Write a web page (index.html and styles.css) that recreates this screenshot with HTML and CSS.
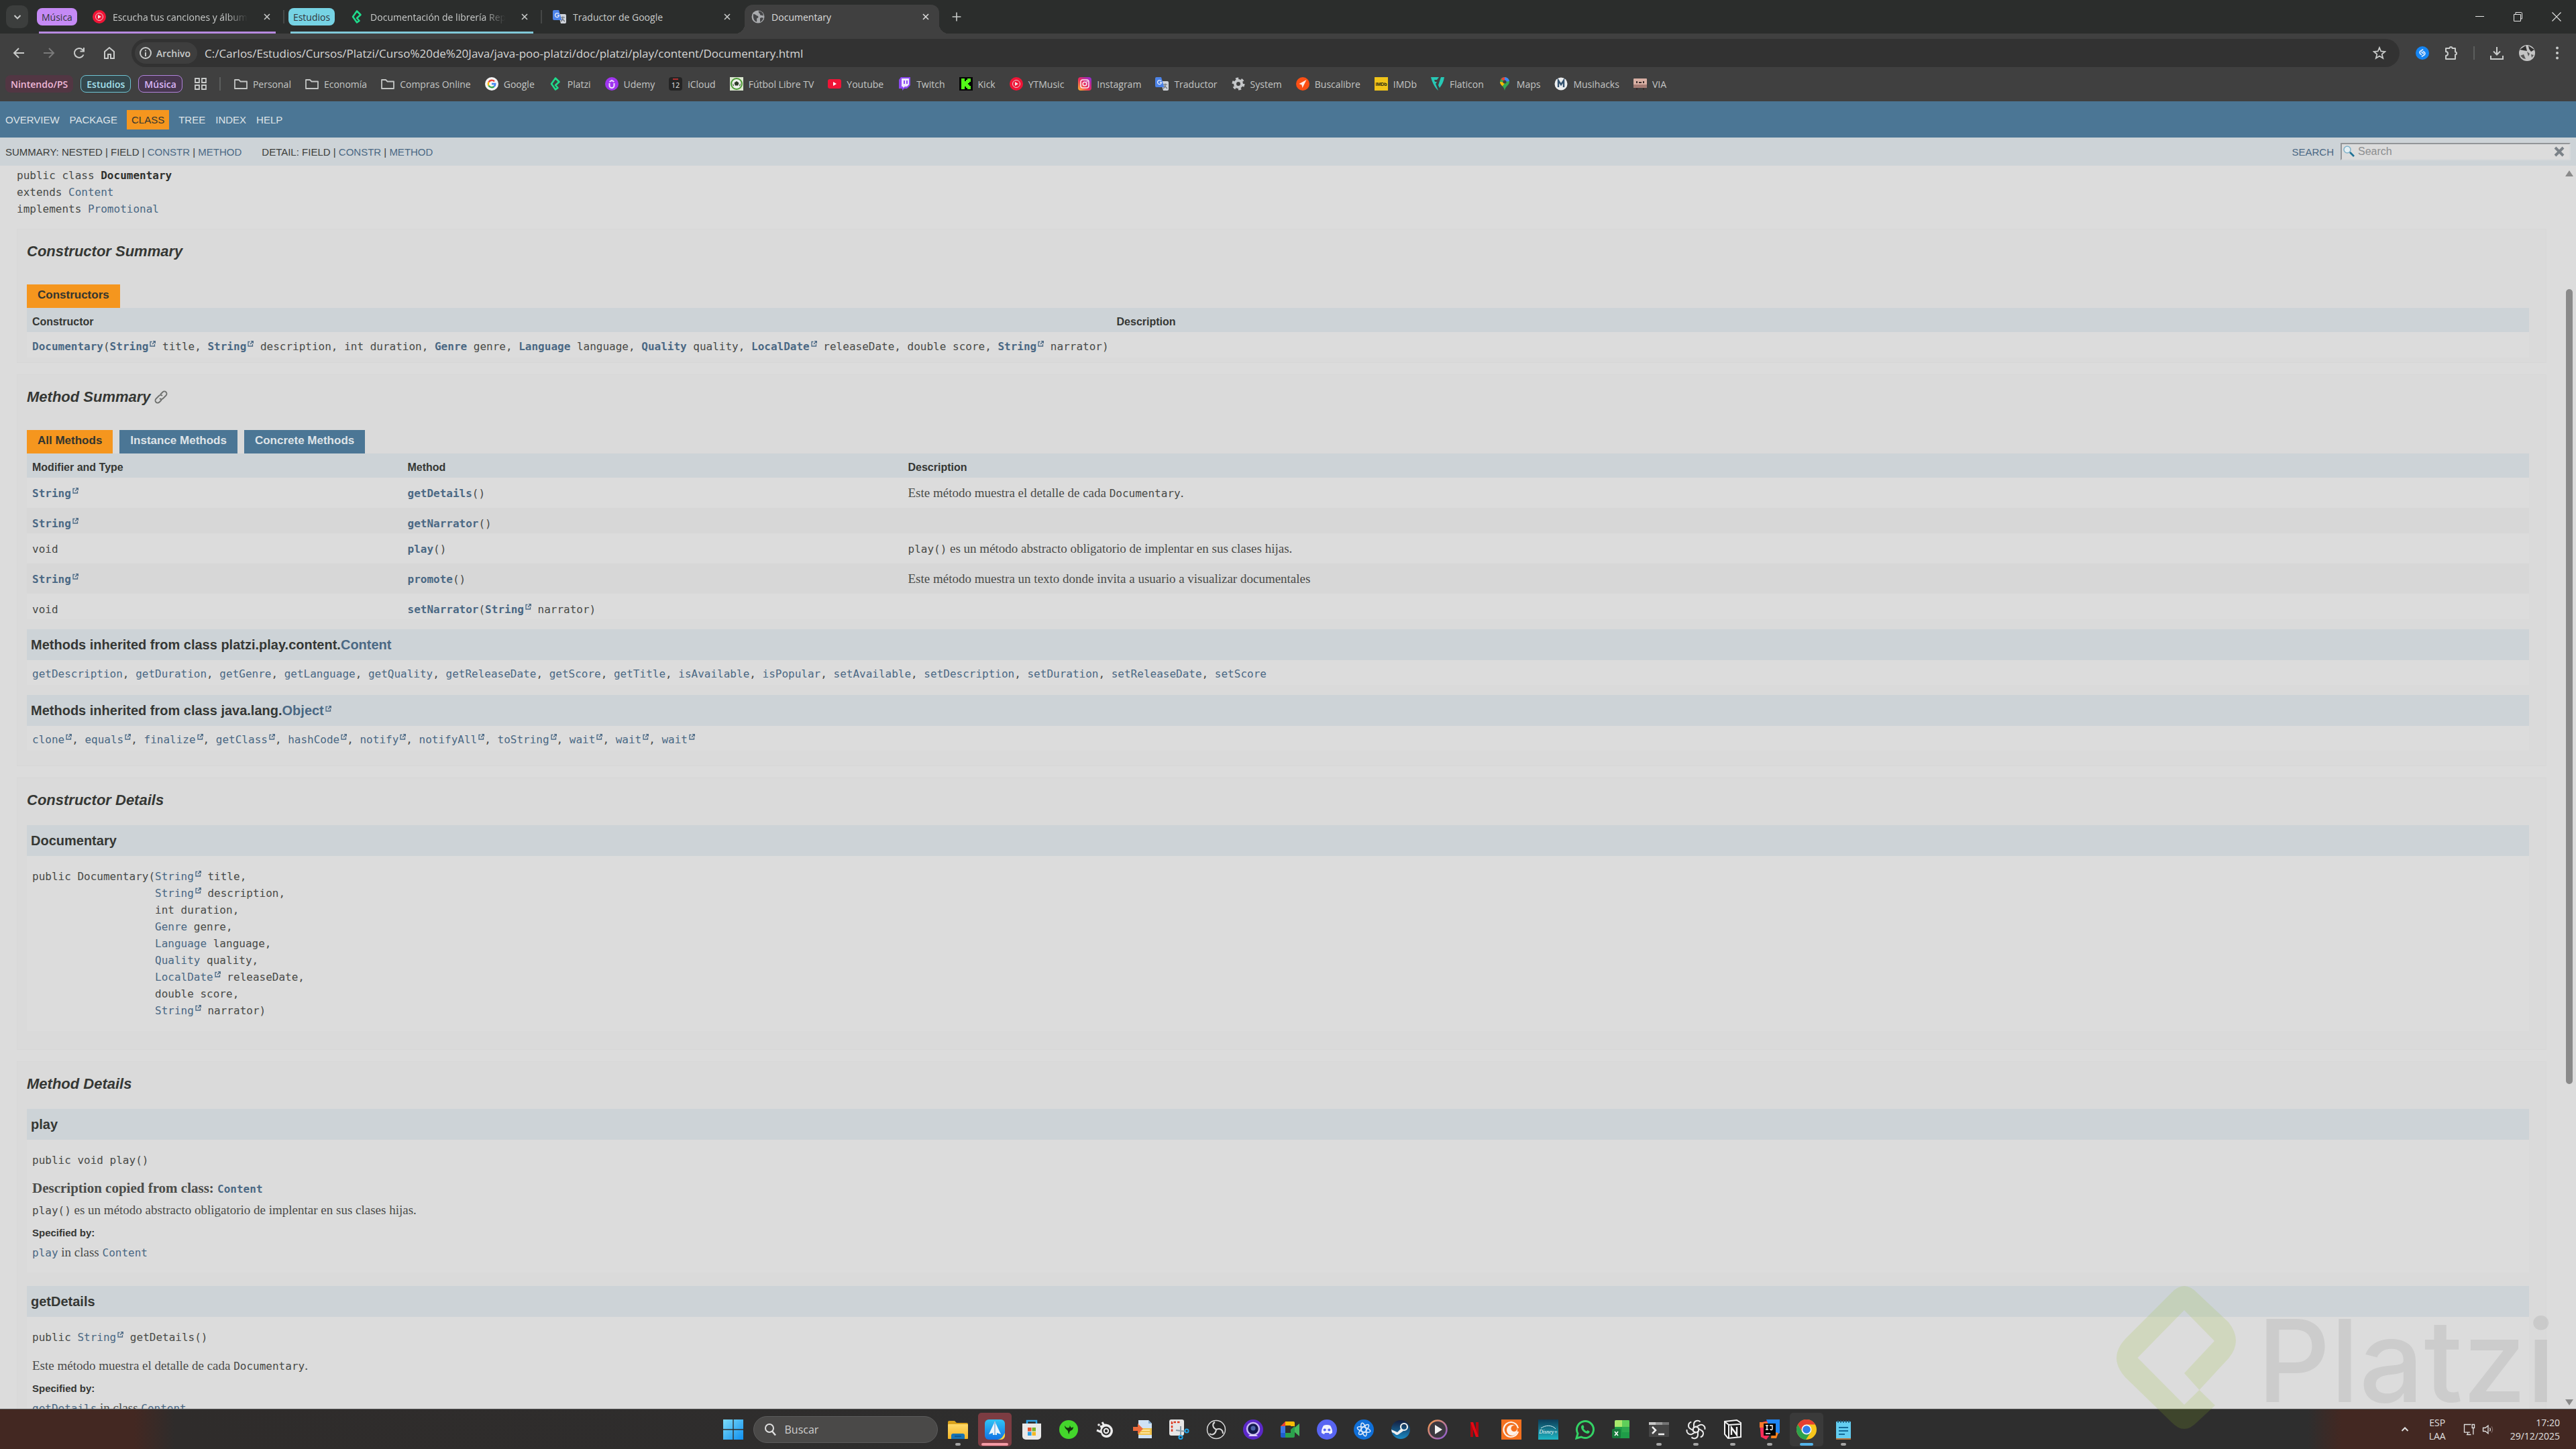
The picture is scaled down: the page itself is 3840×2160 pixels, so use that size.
FILE: index.html
```html
<!DOCTYPE html>
<html lang="es">
<head>
    <meta charset="UTF-8" />
    <meta name="viewport" content="width=device-width, initial-scale=1.0" />
    <title>Documentary</title>
    <link rel="stylesheet" href="styles.css">
</head>
<body>
    <svg class="sprite" aria-hidden="true">
        <defs>
            <linearGradient id="g-insta" x1="0" y1="1" x2="1" y2="0"><stop offset="0" stop-color="#fdc22f"/><stop offset=".45" stop-color="#ea2c59"/><stop offset="1" stop-color="#8a2be2"/></linearGradient>
            <linearGradient id="g-win" x1="0" y1="0" x2="1" y2="1"><stop offset="0" stop-color="#7ddcf8"/><stop offset="1" stop-color="#0f8ff0"/></linearGradient>
            <linearGradient id="g-sky" x1="0" y1="0" x2="0" y2="1"><stop offset="0" stop-color="#2fc4f5"/><stop offset="1" stop-color="#1273e6"/></linearGradient>
            <linearGradient id="g-folder" x1="0" y1="0" x2="0" y2="1"><stop offset="0" stop-color="#ffd968"/><stop offset="1" stop-color="#f3b526"/></linearGradient>
            <linearGradient id="g-media" x1="0" y1="0" x2="1" y2="1"><stop offset="0" stop-color="#f59a4a"/><stop offset="1" stop-color="#8a5bd8"/></linearGradient>
            <linearGradient id="g-steam" x1="0" y1="0" x2="0" y2="1"><stop offset="0" stop-color="#141c3c"/><stop offset="1" stop-color="#1a8ac4"/></linearGradient>
            <linearGradient id="g-disney" x1="0" y1="0" x2="0" y2="1"><stop offset="0" stop-color="#0c3c58"/><stop offset="1" stop-color="#1fb6c4"/></linearGradient>
        </defs>
        <symbol id="close" viewBox="0 0 20 20"><path d="M5 5l10 10M15 5L5 15" fill="none" stroke="currentColor" stroke-width="2"/></symbol>
        <symbol id="reset" viewBox="0 0 20 20"><path d="M4 4l12 12M16 4L4 16" fill="none" stroke="currentColor" stroke-width="4"/></symbol>
        <symbol id="chevron" viewBox="0 0 20 20"><path d="M5.5 8l4.500 4.500L14.500 8" fill="none" stroke="currentColor" stroke-width="2"/></symbol>
        <symbol id="ytmusic" viewBox="0 0 20 20"><circle cx="10" cy="10" r="10" fill="#f01436"/><circle cx="10" cy="10" r="5.5" fill="none" stroke="#e8d0d4" stroke-width="1"/><path d="M8 7l5 3-5 3z" fill="#f4e4e6"/></symbol>
        <symbol id="platzi" viewBox="0 0 20 20"><path d="M10 1.500L3.500 10l6.500 8.500 2.500-3L10 12.500l4.500-4z" fill="none"/><path d="M13.500 16L10 12l5.500-5L10 1.500 4 10l6 8.500z" fill="none" stroke="#1fdc8c" stroke-width="2.500" stroke-linejoin="round"/></symbol>
        <symbol id="translate" viewBox="0 0 20 20"><path d="M8 6h10a2 2 0 012 2v10a2 2 0 01-2 2h-6z" fill="#cfd3da"/><path d="M2 0h7l4.500 15H2a2 2 0 01-2-2V2a2 2 0 012-2z" fill="#4c83e8"/><path d="M9 6a3 3 0 10.500 2H7" fill="none" stroke="#e6ecfa" stroke-width="1.300"/><path d="M12 11h6M15 9.500V11c0 3-1.500 5-3 6M14 13l4 4" fill="none" stroke="#6a7078" stroke-width="1.200"/></symbol>
        <symbol id="globe" viewBox="0 0 20 20"><circle cx="10" cy="10" r="9.5" fill="#a9abae"/><path d="M3 6c3 0 4 2 6 2.500s2 3 0 3.500 0 3-1 5.500C5 17 2 13 3 6zM11 1.500c-1 3 2 3 2 5s3 1 5 2c0-4-3-7-7-7zM13 12c1-1 4-1 5 0-1 3-3 5-5 6z" fill="#454648"/></symbol>
        <symbol id="plus" viewBox="0 0 20 20"><path d="M10 2v16M2 10h16" stroke="currentColor" stroke-width="2"/></symbol>
        <symbol id="back" viewBox="0 0 20 20"><path d="M18 10H3M10 3l-7 7 7 7" fill="none" stroke="currentColor" stroke-width="2"/></symbol>
        <symbol id="forward" viewBox="0 0 20 20"><path d="M2 10h15M10 3l7 7-7 7" fill="none" stroke="currentColor" stroke-width="2"/></symbol>
        <symbol id="reload" viewBox="0 0 20 20"><path d="M16.500 12.500A7 7 0 1115 5l2 2M17 2v5.500h-5.500" fill="none" stroke="currentColor" stroke-width="2"/></symbol>
        <symbol id="home" viewBox="0 0 20 20"><path d="M3 18V8l7-6 7 6v10h-5v-6H8v6z" fill="none" stroke="currentColor" stroke-width="2"/></symbol>
        <symbol id="info" viewBox="0 0 20 20"><circle cx="10" cy="10" r="8" fill="none" stroke="currentColor" stroke-width="2"/><path d="M10 9v6M10 5.500v2" stroke="currentColor" stroke-width="2"/></symbol>
        <symbol id="star" viewBox="0 0 20 20"><path d="M10 2l2.300 5.500 6 .5-4.600 3.900 1.500 5.900L10 14.600l-5.200 3.200 1.500-5.900L1.700 8l6-.5z" fill="none" stroke="currentColor" stroke-width="1.800"/></symbol>
        <symbol id="shazam" viewBox="0 0 20 20"><circle cx="10" cy="10" r="10" fill="#1585f2"/><path d="M10.500 5L7 7.300a2.400 2.400 0 00-.3 3.500l1.800 1.600M9.500 15l3.500-2.300a2.400 2.400 0 00.3-3.500L11.500 7.600M11.500 10.800L9 8.600" fill="none" stroke="#dbe9fb" stroke-width="1.800" stroke-linecap="round"/></symbol>
        <symbol id="puzzle" viewBox="0 0 20 20"><path d="M2 3h5.500a2 2 0 014 0H16v5.500a2 2 0 010 4V19H2v-5a3 3 0 000-6z" fill="none" stroke="currentColor" stroke-width="2" stroke-linejoin="round"/></symbol>
        <symbol id="download" viewBox="0 0 20 20"><path d="M10 1v11M5 7.500l5 5 5-5M1 14v5h18v-5" fill="none" stroke="currentColor" stroke-width="2"/></symbol>
        <symbol id="avatar" viewBox="0 0 24 24"><circle cx="12" cy="12" r="12" fill="#c4c4c4"/><path d="M1 7L10 1l2 8-6-1zM14 1l9 6-5 3-3-4z" fill="#303030"/><path d="M2 16l5-2 3 7-4-1zM12 10l4 3-2 4zM18 14l4 1-3 4z" fill="#585858"/></symbol>
        <symbol id="dots" viewBox="0 0 20 20"><circle cx="10" cy="2.5" r="2" fill="currentColor"/><circle cx="10" cy="10" r="2" fill="currentColor"/><circle cx="10" cy="17.5" r="2" fill="currentColor"/></symbol>
        <symbol id="grid" viewBox="0 0 20 20"><path d="M2 2h6v6H2zM12 2h6v6h-6zM2 12h6v6H2zM12 12h6v6h-6z" fill="none" stroke="currentColor" stroke-width="1.800"/></symbol>
        <symbol id="folder" viewBox="0 0 20 20"><path d="M1 17V4h6l2.500 2.500H19V17z" fill="none" stroke="currentColor" stroke-width="1.800" stroke-linejoin="round"/></symbol>
        <symbol id="google" viewBox="0 0 20 20"><circle cx="10" cy="10" r="10" fill="#f4f4f4"/><path d="M14 6.400A5.300 5.300 0 005.400 7.500" fill="none" stroke="#ea4335" stroke-width="2.400"/><path d="M5.400 7.500a5.300 5.300 0 000 5" fill="none" stroke="#fbbc05" stroke-width="2.400"/><path d="M5.400 12.500a5.300 5.300 0 008 1.500" fill="none" stroke="#34a853" stroke-width="2.400"/><path d="M13.400 14a5 5 0 001.900-4H10" fill="none" stroke="#4285f4" stroke-width="2.400"/></symbol>
        <symbol id="udemy" viewBox="0 0 20 20"><circle cx="10" cy="10" r="10" fill="#a035f0"/><path d="M6.500 9v3.500a3.500 3.500 0 007 0V9M6.500 7L10 5l3.500 2" fill="none" stroke="#f0e4fa" stroke-width="2"/></symbol>
        <symbol id="futbol" viewBox="0 0 20 20"><rect width="20" height="20" fill="#dbe8d0"/><circle cx="10" cy="10" r="8" fill="#eef0ec" stroke="#4b9a34" stroke-width="2"/><path d="M10 6l3.500 2.500-1.300 4H7.800l-1.300-4zM4 9l2 3-1 2zM16 9l-2 3 1 2z" fill="#2c3a28"/></symbol>
        <symbol id="youtube" viewBox="0 0 20 20"><rect y="3" width="20" height="14" rx="3" fill="#f01436"/><path d="M8 7l5 3-5 3z" fill="#fff"/></symbol>
        <symbol id="twitch" viewBox="0 0 20 20"><path d="M5 0h14v12l-5 5h-4l-3 3v-3H2V4z" fill="#8c4af2"/><path d="M6 2h11v9l-3 3h-3l-3 2v-2H6z" fill="#efe8fb"/><path d="M10 5v5M14 5v5" stroke="#8c4af2" stroke-width="2"/></symbol>
        <symbol id="kick" viewBox="0 0 20 20"><rect width="20" height="20" fill="#050505"/><path d="M3 2h5v4h2V4h2V2h5v5h-2v2h-2v2h2v2h2v5h-5v-2h-2v-2H8v4H3z" fill="#53fc18"/></symbol>
        <symbol id="instagram" viewBox="0 0 20 20"><rect width="20" height="20" rx="4" fill="url(#g-insta)"/><rect x="4" y="4" width="12" height="12" rx="3" fill="none" stroke="#fbe6ee" stroke-width="1.600"/><circle cx="10" cy="10" r="2.8" fill="none" stroke="#fbe6ee" stroke-width="1.600"/><circle cx="13.5" cy="6.5" r="1" fill="#fbe6ee"/></symbol>
        <symbol id="gear" viewBox="0 0 20 20"><circle cx="10" cy="10" r="5" fill="none" stroke="#c4c6c8" stroke-width="4"/><circle cx="10" cy="10" r="7.5" fill="none" stroke="#c4c6c8" stroke-width="4" stroke-dasharray="3.9 3.95"/></symbol>
        <symbol id="buscalibre" viewBox="0 0 20 20"><circle cx="10" cy="10" r="10" fill="#fb4f14"/><path d="M15.500 4L4.500 10l4 1.500L9.500 16z" fill="#fdeee8"/></symbol>
        <symbol id="flaticon" viewBox="0 0 20 20"><path d="M0 0h12l-3 4H5l1 3h3l-2 3 4 10C6 16 2 8 0 0zM15 0h5c-1 7-4 12-7 16l-2-4z" fill="#27c9b6"/></symbol>
        <symbol id="maps" viewBox="0 0 20 20"><path d="M3 7a7 7 0 0114 0c0 5-6 6-7 13C9 13 3 12 3 7z" fill="#34a853"/><path d="M10 0a7 7 0 00-5.500 2.600L10 7z" fill="#ea4335"/><path d="M10 0a7 7 0 017 6l-7 1z" fill="#4285f4"/><path d="M3 7c0 3 2 4.500 3.500 6.500L11 8z" fill="#fbbc05"/><circle cx="10" cy="7" r="2.6" fill="#404040"/></symbol>
        <symbol id="musihacks" viewBox="0 0 20 20"><circle cx="10" cy="10" r="9.5" fill="#eceeef"/><path d="M6 15V5l4 6 4-6v10" fill="none" stroke="#34526e" stroke-width="2.400"/></symbol>
        <symbol id="via" viewBox="0 0 20 20"><rect y="2" width="20" height="14" rx="1" fill="#d9b0a4"/><rect y="11" width="20" height="5" fill="#a57c74"/><path d="M5 6v3M15 6v3M8 8h4M5 16v3M15 16v3" stroke="#3a2c2c" stroke-width="2"/></symbol>
        <symbol id="minimize" viewBox="0 0 20 20"><path d="M3 9.500h13" stroke="currentColor" stroke-width="1"/></symbol>
        <symbol id="restore" viewBox="0 0 20 20"><path d="M3.500 6.500h10v10h-10zM6 6V3.500h8.500a1 1 0 011 1V13H13" fill="none" stroke="currentColor" stroke-width="1"/></symbol>
        <symbol id="exit" viewBox="0 0 20 20"><path d="M3.500 3.500l13 13M16.500 3.500l-13 13" fill="none" stroke="currentColor" stroke-width="1.200"/></symbol>
        <symbol id="glass" viewBox="0 0 20 20"><circle cx="7" cy="7" r="5" fill="#e4eef2" stroke="#7fb2ca" stroke-width="1.500"/><path d="M11 11l6 6" stroke="#1f7196" stroke-width="2.600"/></symbol>
        <symbol id="chain" viewBox="0 0 20 20"><path d="M8 12a3.500 3.500 0 005 0l4.500-4.500a3.500 3.500 0 00-5-5L9 6M12 8a3.500 3.500 0 00-5 0l-4.500 4.500a3.500 3.500 0 005 5L11 14" fill="none" stroke="currentColor" stroke-width="1.800"/></symbol>
        <symbol id="t-windows" viewBox="0 0 30 30"><path d="M0 0h14.300v14.300H0zM15.700 0H30v14.300H15.700zM0 15.700h14.300V30H0zM15.700 15.700H30V30H15.700z" fill="url(#g-win)"/></symbol>
        <symbol id="t-search" viewBox="0 0 20 20"><circle cx="9" cy="8" r="6" fill="none" stroke="currentColor" stroke-width="2"/><path d="M13 12.500l5 6" stroke="currentColor" stroke-width="2.400"/></symbol>
        <symbol id="t-explorer" viewBox="0 0 30 30"><path d="M0 4a2 2 0 012-2h8l3 3h15a2 2 0 012 2v21H0z" fill="#d9a21c"/><rect y="7" width="30" height="22" rx="1" fill="url(#g-folder)"/><path d="M5 29v-5a3 3 0 013-3h14a3 3 0 013 3v5z" fill="#1673b4"/><path d="M10 25h10" stroke="#0d4f84" stroke-width="1.500"/></symbol>
        <symbol id="t-plane" viewBox="0 0 30 30"><rect width="30" height="30" rx="6" fill="url(#g-sky)"/><path d="M30 20v4a6 6 0 01-6 6h-5c7-1 8-5 11-10z" fill="#ffd43a"/><path d="M15 3l9 19-6-2v3h-6v-3l-6 2z" fill="#eef5fb"/><path d="M15 3v20" stroke="#9ec3e6" stroke-width="2"/></symbol>
        <symbol id="t-store" viewBox="0 0 30 30"><path d="M8 7V2h14v5" fill="none" stroke="#2fa5e8" stroke-width="2.500"/><path d="M1 6h28v19a5 5 0 01-5 5H6a5 5 0 01-5-5z" fill="#e9e9e9"/><path d="M9 12h5.500v5.500H9z" fill="#e8502c"/><path d="M15.500 12H21v5.500h-5.500z" fill="#79b52a"/><path d="M9 18.500h5.500V24H9z" fill="#2aa0e8"/><path d="M15.500 18.500H21V24h-5.500z" fill="#f5b824"/></symbol>
        <symbol id="t-razer" viewBox="0 0 30 30"><circle cx="15" cy="15" r="14" fill="#44d62c"/><path d="M9 9c1.500 2.500 3 3.500 5 3.500S17 11 16.500 9c1.500 1 1.500 3 3 3.500L22 11c0 3-1.500 5-3.500 5.500S16 19 15.500 22c-1.500-2-1-4-2-5.500S9 14 9 9z" fill="#14330e"/></symbol>
        <symbol id="t-steelseries" viewBox="0 0 30 30"><path d="M9 9a10 10 0 0114 1 10 10 0 011 13 9 9 0 01-15 0L7 16z" fill="#ededed"/><circle cx="16" cy="17" r="6.5" fill="#2e2e2e"/><circle cx="16" cy="17" r="3.2" fill="none" stroke="#ededed" stroke-width="2"/><path d="M2 16l7 3M7 10l3 1M10 4l3 5" stroke="#ededed" stroke-width="3"/><circle cx="5" cy="8" r="1.8" fill="#ededed"/></symbol>
        <symbol id="t-docs" viewBox="0 0 30 30"><path d="M9 1h15l5 5v22H9z" fill="#cfe2f4"/><path d="M24 1v5h5z" fill="#7fa9cf"/><path d="M9 13h20v10H9z" fill="#f0c24c"/><path d="M12 16h14M12 20h14" stroke="#fbe39c" stroke-width="2"/><path d="M1 11h7V6l8 8-8 8v-5H1z" fill="#ec6a3a"/></symbol>
        <symbol id="t-snip" viewBox="0 0 30 30"><rect width="22" height="24" rx="3" fill="#e6e6e6"/><path d="M4 18V4h13" fill="none" stroke="#dc3b22" stroke-width="2.500" stroke-dasharray="3.5 2"/><path d="M10 16l15 2M17 10v13" stroke="#8a9aa6" stroke-width="2"/><circle cx="26" cy="17" r="2.6" fill="none" stroke="#1ea0e4" stroke-width="2"/><circle cx="17" cy="26.500" r="2.6" fill="none" stroke="#1ea0e4" stroke-width="2"/></symbol>
        <symbol id="t-obs" viewBox="0 0 30 30"><circle cx="15" cy="15" r="13.5" fill="#262626" stroke="#d8d8d8" stroke-width="1.500"/><path d="M15 15C9 12 9 6 13 4M15 15c6-3 10 1 10 6M15 15c-1 7-6 9-10 6" fill="none" stroke="#d8d8d8" stroke-width="2"/></symbol>
        <symbol id="t-camo" viewBox="0 0 30 30"><circle cx="15" cy="15" r="15" fill="#5b28c8"/><circle cx="15" cy="14" r="9" fill="#141a4c" stroke="#c9b8f4" stroke-width="2.500"/><circle cx="15" cy="13" r="3.5" fill="#4a62a8"/><path d="M8 25c2-4 12-4 14 0z" fill="#ddd4f6"/></symbol>
        <symbol id="t-meet" viewBox="0 0 30 30"><path d="M8 3h12a2 2 0 012 2v5h-6v-1H8z" fill="#fbbc05"/><path d="M8 3v7H1z" fill="#ea4335"/><path d="M1 10h7v11H1z" fill="#3b78e7"/><path d="M1 20h7v7H3a2 2 0 01-2-2z" fill="#1f5fd0"/><path d="M8 20h8v-5l6-5v15a2 2 0 01-2 2H8z" fill="#2ba24c"/><path d="M22 12l7-6v19l-7-6z" fill="#46b85e"/></symbol>
        <symbol id="t-discord" viewBox="0 0 30 30"><circle cx="15" cy="15" r="15" fill="#5865f2"/><path d="M10 9c3-1.200 7-1.200 10 0 2 3 3.500 7 3 11-1.500 1.200-3 1.800-4 2l-1-2h-6l-1 2c-1-.2-2.500-.8-4-2-.5-4 1-8 3-11z" fill="#f2f3fd"/><circle cx="11.700" cy="15.500" r="2" fill="#5865f2"/><circle cx="18.300" cy="15.500" r="2" fill="#5865f2"/></symbol>
        <symbol id="t-bnet" viewBox="0 0 30 30"><circle cx="15" cy="15" r="15" fill="#0f6fd8"/><g fill="none" stroke="#dceafa" stroke-width="1.500"><ellipse cx="15" cy="15" rx="10" ry="3.500" transform="rotate(15 15 15)"/><ellipse cx="15" cy="15" rx="10" ry="3.500" transform="rotate(75 15 15)"/><ellipse cx="15" cy="15" rx="10" ry="3.500" transform="rotate(135 15 15)"/></g></symbol>
        <symbol id="t-steam" viewBox="0 0 30 30"><circle cx="15" cy="15" r="14" fill="url(#g-steam)"/><circle cx="20" cy="11" r="5" fill="none" stroke="#f0f0f0" stroke-width="2.200"/><path d="M1 15l9 4 6-6 3 4-7 5a4 4 0 01-6-1l-4-2z" fill="#f0f0f0"/></symbol>
        <symbol id="t-media" viewBox="0 0 30 30"><circle cx="15" cy="15" r="13.5" fill="#3c3940" stroke="url(#g-media)" stroke-width="2.500"/><path d="M11 8l11 7-11 7z" fill="#f2f2f2"/></symbol>
        <symbol id="t-netflix" viewBox="0 0 30 30"><path d="M9 4h4v22H9zM17 4h4v22h-4z" fill="#b1060f"/><path d="M9 4h4l8 22h-4z" fill="#e50914"/></symbol>
        <symbol id="t-crunchy" viewBox="0 0 30 30"><rect width="30" height="30" fill="#f4701e"/><path d="M25 18A11 11 0 1115 4a11 11 0 0110 9" fill="none" stroke="#fdf1e8" stroke-width="2.200"/><circle cx="16" cy="16" r="8" fill="#fdf1e8"/><circle cx="19" cy="13.500" r="4.500" fill="#f4701e"/></symbol>
        <symbol id="t-whatsapp" viewBox="0 0 30 30"><path d="M2 28l2-7a12.500 12.500 0 115 5z" fill="none" stroke="#34d265" stroke-width="3"/><path d="M10 9c1-1 2-1 2.500 0l1 2.500-1 1.500c1 2.500 2.500 3.500 4.500 4.500l1.500-1.500 3 1.500c.5 1-.5 3-2.500 3.500-5 0-10-5.500-10-9.500 0-1 .5-2 1-2.500z" fill="#34d265"/></symbol>
        <symbol id="t-excel" viewBox="0 0 30 30"><path d="M4 3a2 2 0 012-2h20v27H4z" fill="#1f9c48"/><path d="M4 3a2 2 0 012-2h9v10H4z" fill="#a9e86c"/><path d="M15 1h9a2 2 0 012 2v8H15z" fill="#5fce5a"/><path d="M15 11h11v8H15z" fill="#2da84e"/><rect y="14" width="13" height="14" rx="2" fill="#177a3c"/><path d="M4 18l5 6M9 18l-5 6" stroke="#fff" stroke-width="1.600"/></symbol>
        <symbol id="t-terminal" viewBox="0 0 30 30"><rect y="4" width="30" height="22" rx="1" fill="#454545"/><rect y="4" width="10" height="4" fill="#c8c8c8"/><rect x="10" y="4" width="10" height="4" fill="#9a9a9a"/><rect x="20" y="4" width="10" height="4" fill="#747474"/><path d="M5 11l5 5-5 5M14 22h9" fill="none" stroke="#f2f2f2" stroke-width="2.500"/></symbol>
        <symbol id="t-gpt" viewBox="0 0 30 30"><g fill="none" stroke="#eaeaea" stroke-width="2"><path d="M12 13V6.500a5.500 5.500 0 019.500-3"/><path d="M12 13V6.500a5.500 5.500 0 019.500-3" transform="rotate(60 15 15)"/><path d="M12 13V6.500a5.500 5.500 0 019.500-3" transform="rotate(120 15 15)"/><path d="M12 13V6.500a5.500 5.500 0 019.500-3" transform="rotate(180 15 15)"/><path d="M12 13V6.500a5.500 5.500 0 019.500-3" transform="rotate(240 15 15)"/><path d="M12 13V6.500a5.500 5.500 0 019.500-3" transform="rotate(300 15 15)"/><path d="M15 10.500l4 2.300v4.500l-4 2.300-4-2.300v-4.500z"/></g></symbol>
        <symbol id="t-notion" viewBox="0 0 30 30"><path d="M3 3l18-2 6 4v21l-19 2-5-6z" fill="#1c1c1c" stroke="#f2f2f2" stroke-width="2"/><path d="M4 4l5 4 17-1M9 8v19" fill="none" stroke="#f2f2f2" stroke-width="2"/><path d="M13 23V12l8 11V11" fill="none" stroke="#f2f2f2" stroke-width="2.400"/></symbol>
        <symbol id="t-idea" viewBox="0 0 30 30"><path d="M0 5l12-3 4 20-6 8-8-4z" fill="#fb2c5a"/><path d="M0 4h12v8H0z" fill="#fc7a2c"/><path d="M10 0h20v20l-10 6z" fill="#1f86f6"/><path d="M18 18l10 2-3 8h-8z" fill="#fc801d"/><rect x="6" y="6" width="18" height="18" fill="#060606"/><path d="M9 9h4M11 9v6M9 15h4M15 9h4v5a1.500 1.500 0 01-3 0M9 21h7" fill="none" stroke="#fff" stroke-width="1.400"/></symbol>
        <symbol id="t-chrome" viewBox="0 0 30 30"><circle cx="15" cy="15" r="15" fill="#f8c61c"/><path d="M2 7.500A15 15 0 0128 7.500H15l-6.500 11z" fill="#e53e30"/><path d="M2 7.500A15 15 0 0014 30l7.500-11.500h-13z" fill="#2da24c"/><circle cx="15" cy="15" r="7.5" fill="#f4f4f4"/><circle cx="15" cy="15" r="5.8" fill="#2f7ce8"/></symbol>
        <symbol id="t-notepad" viewBox="0 0 30 30"><rect x="4" y="3" width="22" height="26" rx="1" fill="#63cdf0"/><path d="M4 28h22v2H4z" fill="#b5713a"/><path d="M8 12h14M8 17h14M8 22h9" stroke="#146a98" stroke-width="2"/><path d="M7 1v4M11 1v4M15 1v4M19 1v4M23 1v4" stroke="#1b5674" stroke-width="1.600"/></symbol>
        <symbol id="t-net" viewBox="0 0 24 24"><path d="M15 3H3v14h10M7 21h8M9 17v4M17 3h4v6h-4zM19 9v12" fill="none" stroke="currentColor" stroke-width="1.600"/></symbol>
        <symbol id="t-sound" viewBox="0 0 24 24"><path d="M3 9v6h4l5 4V5L7 9z" fill="none" stroke="currentColor" stroke-width="1.600"/><path d="M15 9q2 3 0 6" fill="none" stroke="currentColor" stroke-width="1.600"/><path d="M18 6.500q4 5.500 0 11" fill="none" stroke="#806a66" stroke-width="1.400"/></symbol>
    </svg>

    <!-- browser tabs -->
    <div class="tabs">
        <button type="button" class="tab-search" aria-label="Buscar pestañas"><svg class="ico"><use href="#chevron"/></svg></button>
        <div class="group group-musica">
            <button type="button" class="group-name">Música</button>
            <div class="tab">
                <svg class="ico"><use href="#ytmusic"/></svg>
                <span class="tab-title fade">Escucha tus canciones y álbumes</span>
                <button type="button" aria-label="Cerrar"><svg class="ico small"><use href="#close"/></svg></button>
            </div>
        </div>
        <span class="tab-sep"></span>
        <div class="group group-estudios">
            <button type="button" class="group-name">Estudios</button>
            <div class="tab">
                <svg class="ico"><use href="#platzi"/></svg>
                <span class="tab-title fade">Documentación de librería Repo</span>
                <button type="button" aria-label="Cerrar"><svg class="ico small"><use href="#close"/></svg></button>
            </div>
        </div>
        <span class="tab-sep"></span>
        <div class="tab">
            <svg class="ico"><use href="#translate"/></svg>
            <span class="tab-title">Traductor de Google</span>
            <button type="button" aria-label="Cerrar"><svg class="ico small"><use href="#close"/></svg></button>
        </div>
        <div class="tab active">
            <svg class="ico"><use href="#globe"/></svg>
            <span class="tab-title">Documentary</span>
            <button type="button" aria-label="Cerrar"><svg class="ico small"><use href="#close"/></svg></button>
        </div>
        <button type="button" class="tab-new" aria-label="Nueva pestaña"><svg class="ico small"><use href="#plus"/></svg></button>
        <div class="window-buttons">
            <button type="button" aria-label="Minimizar"><svg class="ico"><use href="#minimize"/></svg></button>
            <button type="button" aria-label="Restaurar"><svg class="ico"><use href="#restore"/></svg></button>
            <button type="button" aria-label="Cerrar ventana"><svg class="ico"><use href="#exit"/></svg></button>
        </div>
    </div>

    <!-- address bar -->
    <div class="toolbar">
        <div class="nav-buttons">
            <button type="button" aria-label="Atrás"><svg class="ico"><use href="#back"/></svg></button>
            <button type="button" class="off" aria-label="Adelante"><svg class="ico"><use href="#forward"/></svg></button>
            <button type="button" aria-label="Recargar"><svg class="ico"><use href="#reload"/></svg></button>
            <button type="button" aria-label="Inicio"><svg class="ico"><use href="#home"/></svg></button>
        </div>
        <div class="omnibox">
            <button type="button" class="file-chip"><svg class="ico"><use href="#info"/></svg>Archivo</button>
            <input type="text" class="url" aria-label="Dirección" value="C:/Carlos/Estudios/Cursos/Platzi/Curso%20de%20Java/java-poo-platzi/doc/platzi/play/content/Documentary.html">
            <button type="button" aria-label="Favorito"><svg class="ico"><use href="#star"/></svg></button>
        </div>
        <div class="tools">
            <button type="button" aria-label="Shazam"><svg class="ico"><use href="#shazam"/></svg></button>
            <button type="button" aria-label="Extensiones"><svg class="ico"><use href="#puzzle"/></svg></button>
            <span class="tool-sep"></span>
            <button type="button" aria-label="Descargas"><svg class="ico"><use href="#download"/></svg></button>
            <button type="button" aria-label="Perfil"><svg class="ico avatar"><use href="#avatar"/></svg></button>
            <button type="button" aria-label="Menú"><svg class="ico"><use href="#dots"/></svg></button>
        </div>
    </div>

    <!-- bookmarks -->
    <nav class="bookmarks">
        <button type="button" class="chip chip-pink">Nintendo/PS</button>
        <button type="button" class="chip chip-cyan">Estudios</button>
        <button type="button" class="chip chip-purple">Música</button>
        <button type="button" class="apps" aria-label="Aplicaciones"><svg class="ico"><use href="#grid"/></svg></button>
        <span class="book-sep"></span>
        <a href="#"><svg class="ico"><use href="#folder"/></svg>Personal</a>
        <a href="#"><svg class="ico"><use href="#folder"/></svg>Economía</a>
        <a href="#"><svg class="ico"><use href="#folder"/></svg>Compras Online</a>
        <a href="#"><svg class="ico"><use href="#google"/></svg>Google</a>
        <a href="#"><svg class="ico"><use href="#platzi"/></svg>Platzi</a>
        <a href="#"><svg class="ico"><use href="#udemy"/></svg>Udemy</a>
        <a href="#"><svg class="ico" viewBox="0 0 20 20"><rect width="20" height="20" rx="4" fill="#242424"/><path d="M6 3h8" stroke="#b03030" stroke-width="2"/><text x="10" y="16" text-anchor="middle" class="glyph-12">12</text></svg>iCloud</a>
        <a href="#"><svg class="ico"><use href="#futbol"/></svg>Fútbol Libre TV</a>
        <a href="#"><svg class="ico"><use href="#youtube"/></svg>Youtube</a>
        <a href="#"><svg class="ico"><use href="#twitch"/></svg>Twitch</a>
        <a href="#"><svg class="ico"><use href="#kick"/></svg>Kick</a>
        <a href="#"><svg class="ico"><use href="#ytmusic"/></svg>YTMusic</a>
        <a href="#"><svg class="ico"><use href="#instagram"/></svg>Instagram</a>
        <a href="#"><svg class="ico"><use href="#translate"/></svg>Traductor</a>
        <a href="#"><svg class="ico"><use href="#gear"/></svg>System</a>
        <a href="#"><svg class="ico"><use href="#buscalibre"/></svg>Buscalibre</a>
        <a href="#"><svg class="ico" viewBox="0 0 20 20"><rect width="20" height="20" fill="#f0c419"/><text x="10" y="13" text-anchor="middle" class="glyph-imdb">IMDb</text></svg>IMDb</a>
        <a href="#"><svg class="ico"><use href="#flaticon"/></svg>Flaticon</a>
        <a href="#"><svg class="ico"><use href="#maps"/></svg>Maps</a>
        <a href="#"><svg class="ico"><use href="#musihacks"/></svg>Musihacks</a>
        <a href="#"><svg class="ico"><use href="#via"/></svg>VIA</a>
    </nav>

    <!-- javadoc page -->
    <header class="doc-header">
        <nav class="top-nav">
            <a href="#">OVERVIEW</a>
            <a href="#">PACKAGE</a>
            <a href="#" class="current">CLASS</a>
            <a href="#">TREE</a>
            <a href="#">INDEX</a>
            <a href="#">HELP</a>
        </nav>
        <div class="sub-nav">
            <div class="sub-list">SUMMARY: NESTED | FIELD | <a href="#constructor-summary">CONSTR</a> | <a href="#method-summary">METHOD</a></div>
            <div class="sub-list">DETAIL: FIELD | <a href="#constructor-detail">CONSTR</a> | <a href="#method-detail">METHOD</a></div>
            <div class="search">
                <label for="search-input">SEARCH</label>
                <div class="search-box">
                    <svg class="ico"><use href="#glass"/></svg>
                    <input type="text" id="search-input" placeholder="Search">
                    <button type="button" aria-label="Reset"><svg class="ico"><use href="#reset"/></svg></button>
                </div>
            </div>
        </div>
    </header>

    <div class="viewport">
        <main>
            <div class="class-signature">
                <div>public class <b>Documentary</b></div>
                <div>extends <a href="#">Content</a></div>
                <div>implements <a href="#">Promotional</a></div>
            </div>

            <section class="summary" id="constructor-summary">
                <h2>Constructor Summary</h2>
                <div class="table-tabs"><span class="active-tab">Constructors</span></div>
                <table class="summary-table two-columns">
                    <thead><tr><th>Constructor</th><th>Description</th></tr></thead>
                    <tbody>
                        <tr><td><code><a href="#">Documentary</a>(<a href="#" class="ext">String</a> title, <a href="#" class="ext">String</a> description, int duration, <a href="#">Genre</a> genre, <a href="#">Language</a> language, <a href="#">Quality</a> quality, <a href="#" class="ext">LocalDate</a> releaseDate, double score, <a href="#" class="ext">String</a> narrator)</code></td><td></td></tr>
                    </tbody>
                </table>
            </section>

            <section class="summary" id="method-summary">
                <h2>Method Summary <a href="#method-summary" class="anchor" aria-label="Link"><svg class="ico"><use href="#chain"/></svg></a></h2>
                <div class="table-tabs">
                    <button type="button" class="active-tab">All Methods</button>
                    <button type="button">Instance Methods</button>
                    <button type="button">Concrete Methods</button>
                </div>
                <table class="summary-table three-columns">
                    <thead><tr><th>Modifier and Type</th><th>Method</th><th>Description</th></tr></thead>
                    <tbody>
                        <tr><td><code><a href="#" class="ext">String</a></code></td><td><code><a href="#">getDetails</a>()</code></td><td><div class="block">Este método muestra el detalle de cada <code>Documentary</code>.</div></td></tr>
                        <tr><td><code><a href="#" class="ext">String</a></code></td><td><code><a href="#">getNarrator</a>()</code></td><td></td></tr>
                        <tr><td><code>void</code></td><td><code><a href="#">play</a>()</code></td><td><div class="block"><code>play()</code> es un método abstracto obligatorio de implentar en sus clases hijas.</div></td></tr>
                        <tr><td><code><a href="#" class="ext">String</a></code></td><td><code><a href="#">promote</a>()</code></td><td><div class="block">Este método muestra un texto donde invita a usuario a visualizar documentales</div></td></tr>
                        <tr><td><code>void</code></td><td><code><a href="#">setNarrator</a>(<a href="#" class="ext">String</a> narrator)</code></td><td></td></tr>
                    </tbody>
                </table>

                <div class="inherited">
                    <h3>Methods inherited from class platzi.play.content.<a href="#">Content</a></h3>
                    <code><a href="#">getDescription</a>, <a href="#">getDuration</a>, <a href="#">getGenre</a>, <a href="#">getLanguage</a>, <a href="#">getQuality</a>, <a href="#">getReleaseDate</a>, <a href="#">getScore</a>, <a href="#">getTitle</a>, <a href="#">isAvailable</a>, <a href="#">isPopular</a>, <a href="#">setAvailable</a>, <a href="#">setDescription</a>, <a href="#">setDuration</a>, <a href="#">setReleaseDate</a>, <a href="#">setScore</a></code>
                </div>
                <div class="inherited">
                    <h3>Methods inherited from class java.lang.<a href="#" class="ext">Object</a></h3>
                    <code><a href="#" class="ext">clone</a>, <a href="#" class="ext">equals</a>, <a href="#" class="ext">finalize</a>, <a href="#" class="ext">getClass</a>, <a href="#" class="ext">hashCode</a>, <a href="#" class="ext">notify</a>, <a href="#" class="ext">notifyAll</a>, <a href="#" class="ext">toString</a>, <a href="#" class="ext">wait</a>, <a href="#" class="ext">wait</a>, <a href="#" class="ext">wait</a></code>
                </div>
            </section>

            <section class="details" id="constructor-detail">
                <h2>Constructor Details</h2>
                <article>
                    <h3>Documentary</h3>
                    <div class="signature">
                        <div>public Documentary(</div>
                        <div>
                            <div><a href="#" class="ext">String</a> title,</div>
                            <div><a href="#" class="ext">String</a> description,</div>
                            <div>int duration,</div>
                            <div><a href="#">Genre</a> genre,</div>
                            <div><a href="#">Language</a> language,</div>
                            <div><a href="#">Quality</a> quality,</div>
                            <div><a href="#" class="ext">LocalDate</a> releaseDate,</div>
                            <div>double score,</div>
                            <div><a href="#" class="ext">String</a> narrator)</div>
                        </div>
                    </div>
                </article>
            </section>

            <section class="details" id="method-detail">
                <h2>Method Details</h2>
                <article>
                    <h3>play</h3>
                    <div class="signature"><div>public void play()</div></div>
                    <p class="copied">Description copied from class: <code><a href="#">Content</a></code></p>
                    <p><code>play()</code> es un método abstracto obligatorio de implentar en sus clases hijas.</p>
                    <dl>
                        <dt>Specified by:</dt>
                        <dd><code><a href="#">play</a></code> in class <code><a href="#">Content</a></code></dd>
                    </dl>
                </article>
                <article>
                    <h3>getDetails</h3>
                    <div class="signature"><div>public <a href="#" class="ext">String</a> getDetails()</div></div>
                    <p>Este método muestra el detalle de cada <code>Documentary</code>.</p>
                    <dl>
                        <dt>Specified by:</dt>
                        <dd><code><a href="#">getDetails</a></code> in class <code><a href="#">Content</a></code></dd>
                    </dl>
                </article>
            </section>
        </main>
        <div class="scrollbar">
            <span class="arrow-up"></span>
            <div class="track"><div class="thumb"></div></div>
            <span class="arrow-down"></span>
        </div>
    </div>

    <!-- windows taskbar -->
    <footer class="taskbar">
        <div class="apps-row">
            <button type="button" class="app" aria-label="Inicio"><svg><use href="#t-windows"/></svg></button>
            <label class="task-search"><svg class="ico"><use href="#t-search"/></svg><input type="text" placeholder="Buscar" aria-label="Buscar"></label>
            <button type="button" class="app open" aria-label="Explorador"><svg><use href="#t-explorer"/></svg></button>
            <button type="button" class="app alert" aria-label="Mail"><svg><use href="#t-plane"/></svg></button>
            <button type="button" class="app" aria-label="Store"><svg><use href="#t-store"/></svg></button>
            <button type="button" class="app" aria-label="Razer"><svg><use href="#t-razer"/></svg></button>
            <button type="button" class="app" aria-label="SteelSeries"><svg><use href="#t-steelseries"/></svg></button>
            <button type="button" class="app" aria-label="Documentos"><svg><use href="#t-docs"/></svg></button>
            <button type="button" class="app" aria-label="Recortes"><svg><use href="#t-snip"/></svg></button>
            <button type="button" class="app" aria-label="OBS"><svg><use href="#t-obs"/></svg></button>
            <button type="button" class="app" aria-label="Cámara"><svg><use href="#t-camo"/></svg></button>
            <button type="button" class="app" aria-label="Meet"><svg><use href="#t-meet"/></svg></button>
            <button type="button" class="app" aria-label="Discord"><svg><use href="#t-discord"/></svg></button>
            <button type="button" class="app" aria-label="Battle.net"><svg><use href="#t-bnet"/></svg></button>
            <button type="button" class="app" aria-label="Steam"><svg><use href="#t-steam"/></svg></button>
            <button type="button" class="app" aria-label="Reproductor"><svg><use href="#t-media"/></svg></button>
            <button type="button" class="app" aria-label="Netflix"><svg><use href="#t-netflix"/></svg></button>
            <button type="button" class="app" aria-label="Crunchyroll"><svg><use href="#t-crunchy"/></svg></button>
            <button type="button" class="app" aria-label="Disney"><svg viewBox="0 0 30 30"><rect width="30" height="30" fill="url(#g-disney)"/><path d="M4 13c7-5 17-5 22 1" fill="none" stroke="#d8f0f4" stroke-width="1"/><text x="15" y="21" text-anchor="middle" class="glyph-disney">Disney+</text></svg></button>
            <button type="button" class="app" aria-label="WhatsApp"><svg><use href="#t-whatsapp"/></svg></button>
            <button type="button" class="app" aria-label="Excel"><svg><use href="#t-excel"/></svg></button>
            <button type="button" class="app open" aria-label="Terminal"><svg><use href="#t-terminal"/></svg></button>
            <button type="button" class="app open" aria-label="ChatGPT"><svg><use href="#t-gpt"/></svg></button>
            <button type="button" class="app open" aria-label="Notion"><svg><use href="#t-notion"/></svg></button>
            <button type="button" class="app open" aria-label="IntelliJ"><svg><use href="#t-idea"/></svg></button>
            <button type="button" class="app focus" aria-label="Chrome"><svg><use href="#t-chrome"/></svg></button>
            <button type="button" class="app open" aria-label="Bloc de notas"><svg><use href="#t-notepad"/></svg></button>
        </div>
        <div class="tray">
            <svg class="ico tray-up"><use href="#chevron"/></svg>
            <div class="lang">ESP<br>LAA</div>
            <div class="status"><svg class="ico"><use href="#t-net"/></svg><svg class="ico"><use href="#t-sound"/></svg></div>
            <div class="clock">17:20<br>29/12/2025</div>
        </div>
    </footer>

    <div class="watermark">
        <svg viewBox="0 0 181 214"><path fill-rule="evenodd" d="M83 10Q102-10 121 10L168 54Q190 82 168 108L124.500 155 148 178 121 203Q102 223 83 203L14 136Q-12 107 14 79ZM102 36L32.500 107 102 177 124.500 155 102 130 147 82Z"/></svg>
        <span>Platzi</span>
    </div>
</body>
</html>
```
FILE: styles.css
```css
* {
    margin: 0;
    padding: 0;
    box-sizing: border-box;
}

body {
    height: 100vh;
    display: flex;
    flex-direction: column;
    overflow: hidden;
    background: #dcdcdc;
    color: #3b3d3a;
    font-family: "Open Sans", sans-serif;
    font-size: 14px;
}

button,
input {
    font: inherit;
    color: inherit;
    background: none;
    border: none;
    outline: none;
}

button {
    display: flex;
    align-items: center;
    justify-content: center;
}

a {
    color: #4a6884;
    text-decoration: none;
}

.sprite {
    position: absolute;
    width: 0;
    height: 0;
}

.ico {
    width: 20px;
    height: 20px;
    flex: none;
}

.small {
    width: 16px;
    height: 16px;
}

.glyph-12 {
    font: 11px "Open Sans", sans-serif;
    fill: #e4e4e4;
}

.glyph-imdb {
    font: bold 7px "Liberation Sans", sans-serif;
    fill: #1c1c10;
}

.glyph-disney {
    font: italic 8px "Liberation Serif", serif;
    fill: #f0fafc;
}

/* tabs */
.tabs {
    height: 50px;
    flex: none;
    display: flex;
    align-items: center;
    padding: 0 0 0 9px;
    background: #2b2d2c;
    color: #c9cbca;
}

.tab-search {
    width: 33px;
    height: 34px;
    border-radius: 10px;
    background: #3c3e3d;
    margin-right: 13px;
}

.group {
    position: relative;
    height: 50px;
    display: flex;
    align-items: center;
    gap: 13px;
}

.group::after {
    content: "";
    position: absolute;
    left: 3px;
    right: 7px;
    bottom: 0;
    height: 3px;
}

.group-musica::after {
    background: #b78ae0;
}

.group-estudios::after {
    background: #80c8d8;
}

.group-name {
    height: 26px;
    padding: 0 7px;
    border-radius: 8px;
    color: #33363a;
}

.group-musica .group-name {
    background: #c58af5;
}

.group-estudios .group-name {
    background: #76d3e4;
}

.tab {
    position: relative;
    width: 290px;
    height: 42px;
    display: flex;
    align-items: center;
    gap: 10px;
    padding: 0 12px 0 10px;
}

.tab-title {
    flex: 1;
    white-space: nowrap;
    overflow: hidden;
}

.fade {
    mask-image: linear-gradient(to right, #000 80%, transparent 95%);
}

.tab-sep {
    width: 2px;
    height: 20px;
    margin: 0 6px 0 4px;
    background: #464847;
}

.active {
    height: 43px;
    align-self: flex-end;
    margin-left: 6px;
    padding-bottom: 7px;
    border-radius: 12px 12px 0 0;
    background: #404040;
    color: #dcdcdc;
}

.active::before,
.active::after {
    content: "";
    position: absolute;
    bottom: 0;
    width: 14px;
    height: 14px;
}

.active::before {
    left: -14px;
    background: radial-gradient(circle at 0 0, transparent 14px, #404040 14px);
}

.active::after {
    right: -14px;
    background: radial-gradient(circle at 100% 0, transparent 14px, #404040 14px);
}

.tab-new {
    margin-left: 18px;
}

.window-buttons {
    display: flex;
    gap: 37px;
    margin-left: auto;
    padding-right: 19px;
    color: #e6e6e6;
}

/* toolbar */
.toolbar {
    height: 58px;
    flex: none;
    display: flex;
    align-items: flex-start;
    padding: 8px 18px;
    background: #404040;
    color: #c9cbca;
}

.nav-buttons {
    height: 42px;
    display: flex;
    align-items: center;
    gap: 25px;
    margin-right: 23px;
}

.off {
    color: #7a7a7a;
}

.omnibox {
    flex: 1;
    height: 42px;
    display: flex;
    align-items: center;
    padding: 0 20px 0 5px;
    border-radius: 21px;
    background: #323232;
}

.file-chip {
    height: 32px;
    gap: 6px;
    padding: 0 10px 0 6px;
    border-radius: 16px;
    background: #3e3e3e;
    font-weight: 600;
}

.url {
    flex: 1;
    margin-left: 11px;
    font-size: 17px;
    color: #d6d6d6;
}

.tools {
    height: 42px;
    display: flex;
    align-items: center;
    gap: 23px;
    margin-left: 24px;
}

.tool-sep {
    width: 2px;
    height: 20px;
    background: #5c5e5d;
}

.avatar {
    width: 24px;
    height: 24px;
}

/* bookmarks */
.bookmarks {
    height: 43px;
    flex: none;
    display: flex;
    align-items: flex-start;
    padding: 4px 8px 0;
    background: #404040;
    color: #c9cbca;
}

.bookmarks a {
    height: 26px;
    display: flex;
    align-items: center;
    gap: 8px;
    margin-right: 21px;
    color: #c4c6c5;
}

.chip {
    height: 26px;
    padding: 0 8px;
    margin-right: 11px;
    border-radius: 8px;
    font-weight: 600;
}

.chip-pink {
    background: #523643;
    color: #f0b8d8;
}

.chip-cyan {
    background: #34474c;
    border: 1px solid #6fc4d4;
    color: #a4e0ec;
}

.chip-purple {
    background: #47364f;
    border: 1px solid #b184dc;
    color: #d9b4f6;
}

.apps {
    height: 26px;
    margin: 0 18px 0 6px;
}

.book-sep {
    width: 2px;
    height: 20px;
    margin: 3px 20px 0 0;
    background: #5c5e5d;
}

/* javadoc header */
.doc-header {
    flex: none;
    font-family: "Liberation Sans", sans-serif;
    font-size: 15px;
}

.top-nav {
    height: 54px;
    display: flex;
    align-items: center;
    gap: 15px;
    padding-left: 8px;
    background: #4b7695;
}

.top-nav a {
    color: #dfe4e8;
}

.top-nav .current {
    padding: 6px 7px;
    margin: 0 -1px;
    background: #f5961e;
    color: #33352f;
}

.sub-nav {
    height: 42px;
    display: flex;
    align-items: center;
    gap: 30px;
    padding: 0 8px;
    background: #cdd3d7;
}

.search {
    display: flex;
    align-items: center;
    gap: 10px;
    margin-left: auto;
    color: #4a6884;
}

.search-box {
    width: 343px;
    height: 26px;
    display: flex;
    align-items: center;
    gap: 3px;
    padding: 0 5px 0 1px;
    border: 2px solid #d6d9db;
    border-top-color: #929598;
    border-left-color: #929598;
    background: #dcdcdc;
}

.search-box input {
    flex: 1;
    font-size: 16px;
}

.search-box input::placeholder {
    color: #8c8e90;
}

.search-box button {
    color: #7b8288;
}

/* javadoc content */
.viewport {
    flex: 1;
    min-height: 0;
    display: flex;
    overflow: hidden;
    line-height: 25px;
}

main {
    flex: 1;
    padding: 2px 24px 0 25px;
    font-family: "Liberation Serif", serif;
    font-size: 19px;
    color: #4b4c4a;
}

code,
.signature,
.class-signature {
    font-family: "DejaVu Sans Mono", monospace;
    font-size: 16px;
    color: #484a47;
}

code {
    line-height: 20px;
}

.class-signature b {
    color: #2e302d;
}

.ext::after {
    content: "";
    display: inline-block;
    width: 9px;
    height: 9px;
    margin: 0 0 5px 2px;
    background: url('data:image/svg+xml,<svg xmlns="http://www.w3.org/2000/svg" viewBox="0 0 9 9"><path d="M3.500 1.500H1v6.500h6.500V5M5 .7h3.300V4M8 1L4 5" fill="none" stroke="%234a6884" stroke-width="1.300"/></svg>') no-repeat;
}

section {
    margin-top: 17px;
    padding: 18px 25px 7px 14px;
    border: 1px solid #d7d7d7;
    background: #dadada;
}

h2 {
    display: flex;
    align-items: center;
    gap: 5px;
    height: 30px;
    margin-bottom: 22px;
    font: italic bold 22px/30px "Liberation Sans", sans-serif;
    color: #353734;
}

.anchor {
    display: flex;
    color: #6e706e;
}

.summary h2 {
    margin-bottom: 34px;
}

h3 {
    height: 46px;
    padding-left: 6px;
    background: #cdd3d7;
    font: bold 20px/46px "Liberation Sans", sans-serif;
    color: #353734;
}

.table-tabs {
    display: flex;
    gap: 10px;
    height: 35px;
}

.table-tabs > * {
    padding: 0 16px 3px;
    background: #4b7695;
    color: #dfe4e8;
    font: bold 17px/32px "Liberation Sans", sans-serif;
}

.table-tabs .active-tab {
    background: #f5961e;
    color: #33352f;
}

.summary-table {
    width: 100%;
    border-collapse: collapse;
    background: #dcdcdc;
}

.summary-table th {
    height: 36px;
    padding: 5px 8px 0;
    background: #cdd3d7;
    font: bold 16px/24px "Liberation Sans", sans-serif;
    text-align: left;
    color: #353734;
}

.summary-table td {
    height: 38px;
    padding: 10px 8px 3px;
    vertical-align: top;
}

.summary-table tbody tr:nth-child(even) {
    background: #d7d7d7;
}

.summary-table td a {
    font-weight: bold;
}

.two-columns th:first-child {
    width: 1%;
}

.two-columns td {
    padding: 8px 4px 3px 8px;
    white-space: nowrap;
}

.three-columns th:nth-child(1) {
    width: 15%;
}

.three-columns th:nth-child(2) {
    width: 20%;
}

.block {
    padding-bottom: 7px;
}

.inherited {
    margin-top: 15px;
    padding-bottom: 4px;
    background: #dcdcdc;
}

.inherited:last-child {
    margin-bottom: 15px;
}

.inherited code {
    display: block;
    padding: 8px 8px 0;
    line-height: 25px;
}

.details {
    padding-bottom: 27px;
}

article {
    padding-bottom: 18px;
    background: #dcdcdc;
}

article + article {
    margin-top: 20px;
}

.signature {
    display: flex;
    padding: 18px 8px 0;
}

article p {
    padding: 0 8px;
    margin-top: 17px;
}

.copied {
    font-size: 21px;
    font-weight: bold;
}

.copied + p {
    margin-top: 7px;
}

dl {
    padding: 9px 8px 0;
}

dt {
    font: bold 15px/25px "Liberation Sans", sans-serif;
    color: #353734;
}

dd {
    margin-top: 4px;
}

.scrollbar {
    width: 20px;
    display: flex;
    flex-direction: column;
    align-items: center;
    padding: 7px 0 5px;
}

.arrow-up,
.arrow-down {
    border: 6px solid transparent;
    border-top: none;
    border-bottom: 9px solid #8a8a8a;
}

.arrow-down {
    transform: rotate(180deg);
}

.track {
    flex: 1;
    display: flex;
    flex-direction: column;
    padding: 168px 0 470px;
}

.thumb {
    flex: 1;
    width: 10px;
    border-radius: 5px;
    background: #8a8a8a;
}

/* taskbar */
.taskbar {
    height: 60px;
    flex: none;
    display: grid;
    grid-template-columns: 1fr auto 1fr;
    align-items: center;
    border-top: 1px solid #5a5a5a;
    background: linear-gradient(to right, #432822 200px, #2f2c2b 260px, #2e2e2e 50%, #2e2e2e calc(100% - 400px), #432822 calc(100% - 350px));
    color: #e0e0e0;
}

.apps-row {
    grid-column: 2;
    display: flex;
    align-items: center;
    gap: 5px;
}

.app {
    position: relative;
    width: 50px;
    height: 50px;
    border-radius: 5px;
}

.app svg {
    width: 30px;
    height: 30px;
}

.app::after {
    position: absolute;
    bottom: 1px;
    left: 50%;
    width: 8px;
    height: 4px;
    margin-left: -4px;
    border-radius: 2px;
    background: #a4a4a4;
}

.open::after,
.focus::after,
.alert::after {
    content: "";
}

.focus {
    background: #3a3a3a;
}

.focus::after {
    width: 20px;
    margin-left: -10px;
    background: #55b4ea;
}

.alert {
    background: #7c3c42;
}

.alert::after {
    width: 40px;
    margin-left: -20px;
    background: #f49aa4;
}

.task-search {
    width: 275px;
    height: 40px;
    display: flex;
    align-items: center;
    gap: 12px;
    padding: 0 14px;
    border: 1px solid #5c5c5c;
    border-radius: 20px;
    background: #4a4948;
}

.task-search input {
    flex: 1;
    min-width: 0;
    font-size: 16px;
}

.task-search input::placeholder {
    color: #cfcfcf;
}

.tray {
    justify-self: end;
    display: flex;
    align-items: center;
    padding-right: 24px;
    font-size: 14px;
    line-height: 20px;
    text-align: center;
}

.tray-up {
    transform: rotate(180deg);
    margin-right: 26px;
}

.status {
    display: flex;
    gap: 8px;
    margin: 0 23px 0 25px;
}

.clock {
    text-align: right;
}

/* logo over the corner of the screen */
.watermark {
    position: absolute;
    right: 31px;
    bottom: 21px;
    display: flex;
    align-items: flex-start;
    gap: 30px;
    color: rgba(0, 0, 0, 0.07);
}

.watermark svg {
    width: 181px;
    height: 214px;
    fill: rgba(150, 190, 40, 0.16);
}

.watermark span {
    font: 500 170px/222px "Inter", sans-serif;
}
```
